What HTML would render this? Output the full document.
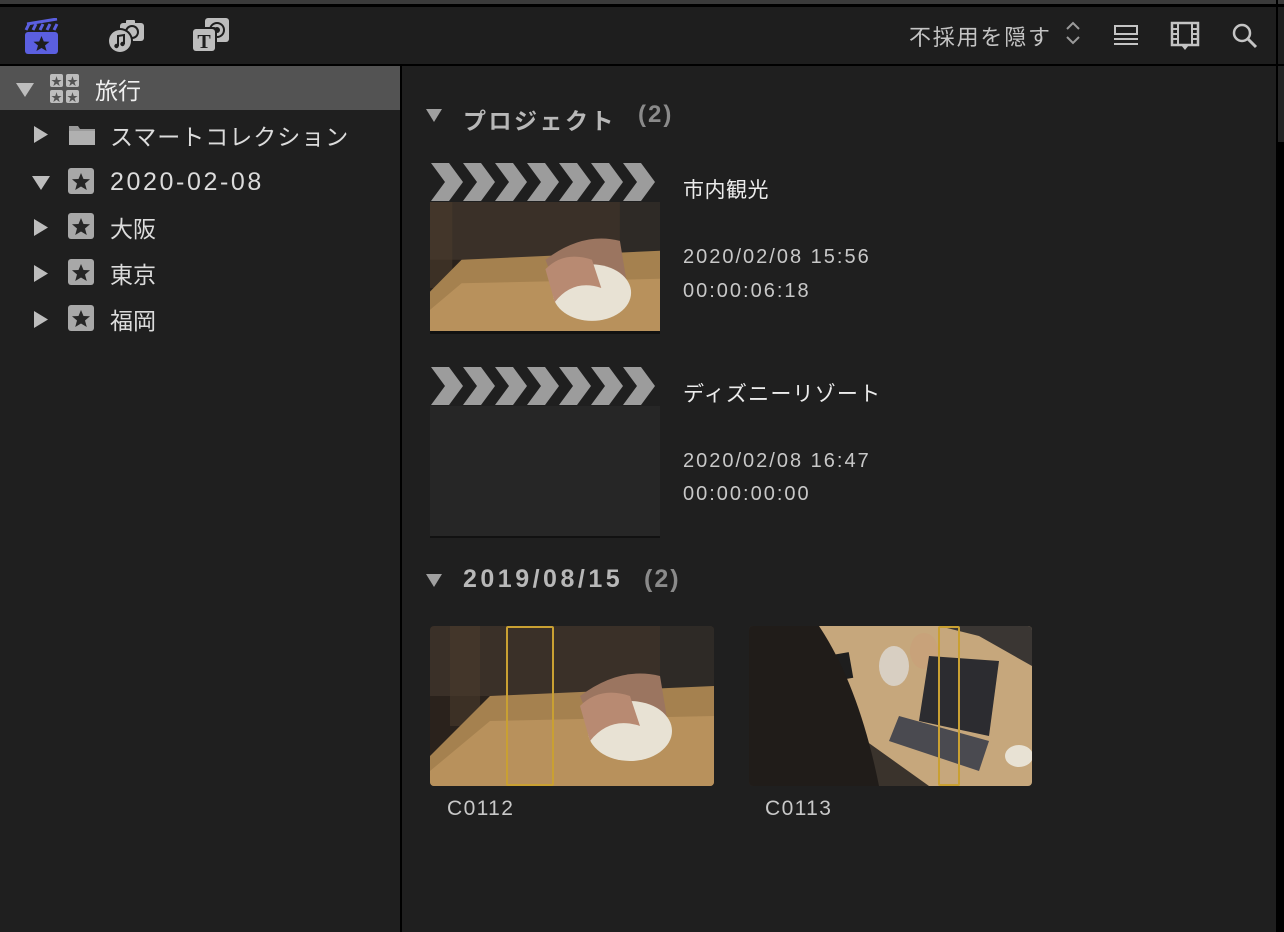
<!DOCTYPE html>
<html><head><meta charset="utf-8"><style>
*{margin:0;padding:0;box-sizing:border-box}
body{width:1284px;height:932px;background:#1f1f1f;position:relative;overflow:hidden;font-family:"Liberation Sans","Noto Sans CJK JP",sans-serif;color:#d8d8d8}
.a{position:absolute}
.t{position:absolute;white-space:nowrap}
</style></head><body>
<div class="a" style="left:0;top:0;width:1284px;height:4px;background:#3a3a3a"></div>
<div class="a" style="left:0;top:4px;width:1284px;height:3px;background:#000"></div>
<div class="a" style="left:0;top:7px;width:1284px;height:57px;background:#1e1e1e"></div>
<div class="a" style="left:0;top:64px;width:1284px;height:2px;background:#000"></div>
<div class="a" style="left:400px;top:66px;width:2px;height:866px;background:#000"></div>
<div class="a" style="left:1276px;top:0;width:2px;height:932px;background:#000"></div>
<div class="a" style="left:1278px;top:66px;width:6px;height:866px;background:#000"></div>
<div class="a" style="left:1278px;top:66px;width:6px;height:76px;background:#232323"></div>

<!-- toolbar icons -->
<svg class="a" style="left:24px;top:18px" width="36" height="38" viewBox="0 0 36 38">
<rect x="1" y="14" width="33" height="22" rx="3" fill="#5b5fe0"/>
<rect x="1" y="6" width="33" height="7" fill="#1e1e1e"/>
<path d="M2 12 L5 6 M9 12 L12 6 M16 12 L19 6 M23 12 L26 6 M30 12 L33 6" stroke="#5b5fe0" stroke-width="3"/>
<path d="M3 6 L33 1" stroke="#5b5fe0" stroke-width="3"/>
<polygon points="17.5,18 19.8,23.5 25.5,23.8 21,27.5 22.6,33 17.5,30 12.4,33 14,27.5 9.5,23.8 15.2,23.5" fill="#1e1e1e"/>
</svg>
<svg class="a" style="left:106px;top:17px" width="40" height="38" viewBox="0 0 40 38">
<rect x="14" y="6" width="24" height="18" rx="3" fill="#bdbdbd"/>
<rect x="20" y="3" width="9" height="5" rx="1" fill="#bdbdbd"/>
<circle cx="26" cy="15" r="7" fill="#1e1e1e"/><circle cx="26" cy="15" r="5" fill="#bdbdbd"/>
<circle cx="14" cy="24" r="13" fill="#1e1e1e"/>
<circle cx="14" cy="24" r="11" fill="#bdbdbd"/>
<path d="M12 29 V19 L18 18 V27" stroke="#1e1e1e" stroke-width="2" fill="none"/>
<circle cx="10.5" cy="29" r="2.2" fill="#1e1e1e"/><circle cx="16.5" cy="27" r="2.2" fill="#1e1e1e"/>
</svg>
<svg class="a" style="left:191px;top:17px" width="40" height="38" viewBox="0 0 40 38">
<rect x="14" y="1" width="24" height="24" rx="3" fill="#bdbdbd"/>
<circle cx="26" cy="13" r="8" fill="#1e1e1e"/><circle cx="26" cy="13" r="6" fill="#bdbdbd"/><circle cx="26" cy="13" r="3" fill="#1e1e1e"/>
<rect x="0" y="10" width="26" height="26" rx="3" fill="#1e1e1e"/>
<rect x="2" y="12" width="22" height="22" rx="3" fill="#bdbdbd"/>
<text x="13" y="31" text-anchor="middle" font-family="Liberation Serif" font-weight="bold" font-size="20" fill="#1e1e1e">T</text>
</svg>

<div class="t" style="left:909px;top:20px;font-size:22px;letter-spacing:1.8px;color:#c4c4c4">不採用を隠す</div>
<svg class="a" style="left:1064px;top:20px" width="18" height="26"><path d="M3 9 L9 3 L15 9 M3 17 L9 23 L15 17" stroke="#9a9a9a" stroke-width="2" fill="none"/></svg>
<svg class="a" style="left:1113px;top:22px" width="28" height="26"><rect x="2" y="4" width="22" height="8" stroke="#c4c4c4" stroke-width="2" fill="none"/><path d="M1 17 H25 M1 22 H25" stroke="#c4c4c4" stroke-width="2"/></svg>
<svg class="a" style="left:1170px;top:20px" width="32" height="32"><rect x="2" y="3" width="26" height="22" stroke="#c4c4c4" stroke-width="2.5" fill="none"/><path d="M8 3 V25 M22 3 V25 M2 9 H8 M2 14 H8 M2 19 H8 M22 9 H28 M22 14 H28 M22 19 H28" stroke="#c4c4c4" stroke-width="2"/><polygon points="11,25 19,25 15,30" fill="#c4c4c4"/></svg>
<svg class="a" style="left:1231px;top:22px" width="30" height="28"><circle cx="11" cy="11" r="8" stroke="#c4c4c4" stroke-width="2.5" fill="none"/><path d="M17 17 L25 25" stroke="#c4c4c4" stroke-width="3"/></svg>

<!-- sidebar -->
<div class="a" style="left:0;top:66px;width:400px;height:44px;background:#535353"></div>
<svg class="a" style="left:15px;top:82px" width="20" height="16"><polygon points="1,1 19,1 10,15" fill="#bdbdbd"/></svg>
<svg class="a" style="left:49px;top:73px" width="32" height="32">
<g fill="#bdbdbd"><rect x="1" y="1" width="13" height="13" rx="2"/><rect x="17" y="1" width="13" height="13" rx="2"/><rect x="1" y="17" width="13" height="13" rx="2"/><rect x="17" y="17" width="13" height="13" rx="2"/></g>
<g fill="#535353" font-size="11" text-anchor="middle"><text x="7.5" y="12">★</text><text x="23.5" y="12">★</text><text x="7.5" y="28">★</text><text x="23.5" y="28">★</text></g></svg>
<div class="t" style="left:95px;top:72px;font-size:23px;color:#f0f0f0">旅行</div>

<svg class="a" style="left:33px;top:125px" width="16" height="20"><polygon points="1,1 15,9.5 1,18" fill="#bdbdbd"/></svg>
<svg class="a" style="left:68px;top:123px" width="28" height="24"><path d="M1 3 H10 L12 6 H27 V22 H1 Z" fill="#9a9a9a"/><rect x="1" y="8" width="26" height="14" fill="#b0b0b0"/></svg>
<div class="t" style="left:110px;top:118px;font-size:23px;letter-spacing:1px;color:#dcdcdc">スマートコレクション</div>

<svg class="a" style="left:31px;top:175px" width="20" height="16"><polygon points="1,1 19,1 10,15" fill="#bdbdbd"/></svg>
<div class="t" style="left:110px;top:168px;font-size:25px;letter-spacing:2.6px;color:#dcdcdc">2020-02-08</div>
<div class="t" style="left:110px;top:210px;font-size:23px;color:#dcdcdc">大阪</div>
<div class="t" style="left:110px;top:256px;font-size:23px;color:#dcdcdc">東京</div>
<div class="t" style="left:110px;top:302px;font-size:23px;color:#dcdcdc">福岡</div>
<svg class="a" style="left:33px;top:218px" width="16" height="20"><polygon points="1,1 15,9.5 1,18" fill="#bdbdbd"/></svg>
<svg class="a" style="left:33px;top:264px" width="16" height="20"><polygon points="1,1 15,9.5 1,18" fill="#bdbdbd"/></svg>
<svg class="a" style="left:33px;top:310px" width="16" height="20"><polygon points="1,1 15,9.5 1,18" fill="#bdbdbd"/></svg>
<svg class="a" style="left:67px;top:168px" width="28" height="250">
<defs><g id="st"><rect x="1" y="0" width="26" height="26" rx="3" fill="#a8a8a8"/><polygon points="14,5 16.5,11 23,11.3 18,15.5 19.8,22 14,18.5 8.2,22 10,15.5 5,11.3 11.5,11" fill="#262626"/></g></defs>
<use href="#st" y="0"/><use href="#st" y="45"/><use href="#st" y="91"/><use href="#st" y="137"/>
</svg>

<!-- projects header -->
<svg class="a" style="left:425px;top:108px" width="18" height="16"><polygon points="1,1 17,1 9,14" fill="#a0a0a0"/></svg>
<div class="t" style="left:463px;top:102px;font-size:23px;font-weight:bold;letter-spacing:2.5px;color:#b8b8b8">プロジェクト</div>
<div class="t" style="left:638px;top:101px;font-size:24px;font-weight:bold;letter-spacing:2px;color:#8a8a8a">(2)</div>

<svg width="0" height="0" style="position:absolute"><defs>
<g id="chev"><polygon points="0,0 18,0 32,19 18,38 0,38 14,19" fill="#9c9c9c"/></g>
<g id="mouse">
<rect width="284" height="160" fill="#2a221c"/>
<rect x="0" y="0" width="284" height="70" fill="#3a3028"/>
<rect x="20" y="0" width="30" height="100" fill="#4a3a2c" opacity=".6"/>
<rect x="230" y="0" width="54" height="160" fill="#2e2a26"/>
<polygon points="0,130 60,70 284,60 284,160 0,160" fill="#a5814f"/>
<polygon points="0,145 60,95 284,90 284,160 0,160" fill="#b8915c"/>
<path d="M150 70 Q190 40 230 50 L240 110 L170 120 Z" fill="#9b7560"/>
<ellipse cx="200" cy="105" rx="42" ry="30" fill="#e8e2d4"/>
<path d="M150 80 Q170 60 200 70 L210 100 Q180 90 160 115 Z" fill="#b88a72"/>
</g>
</defs></svg>

<!-- project 1 -->
<svg class="a" style="left:431px;top:163px" width="228" height="38"><use href="#chev" x="0"/><use href="#chev" x="32"/><use href="#chev" x="64"/><use href="#chev" x="96"/><use href="#chev" x="128"/><use href="#chev" x="160"/><use href="#chev" x="192"/></svg>
<svg class="a" style="left:430px;top:202px" width="230" height="131" viewBox="0 0 284 160" preserveAspectRatio="none"><use href="#mouse" transform="translate(-30,-10) scale(1.15)"/></svg>
<div class="a" style="left:430px;top:331px;width:230px;height:3px;background:#111"></div>
<div class="t" style="left:683px;top:174px;font-size:21px;letter-spacing:0.5px;color:#ececec">市内観光</div>
<div class="t" style="left:683px;top:246px;font-size:20px;letter-spacing:2px;color:#c8c8c8">2020/02/08 15:56</div>
<div class="t" style="left:683px;top:280px;font-size:20px;letter-spacing:2px;color:#c8c8c8">00:00:06:18</div>

<!-- project 2 -->
<svg class="a" style="left:431px;top:367px" width="228" height="38"><use href="#chev" x="0"/><use href="#chev" x="32"/><use href="#chev" x="64"/><use href="#chev" x="96"/><use href="#chev" x="128"/><use href="#chev" x="160"/><use href="#chev" x="192"/></svg>
<div class="a" style="left:430px;top:406px;width:230px;height:130px;background:#262626"></div>
<div class="a" style="left:430px;top:536px;width:230px;height:2px;background:#111"></div>
<div class="t" style="left:683px;top:378px;font-size:21px;letter-spacing:1.2px;color:#ececec">ディズニーリゾート</div>
<div class="t" style="left:683px;top:450px;font-size:20px;letter-spacing:2px;color:#c8c8c8">2020/02/08 16:47</div>
<div class="t" style="left:683px;top:483px;font-size:20px;letter-spacing:2px;color:#c8c8c8">00:00:00:00</div>

<!-- event header -->
<svg class="a" style="left:425px;top:573px" width="18" height="16"><polygon points="1,1 17,1 9,14" fill="#a0a0a0"/></svg>
<div class="t" style="left:463px;top:565px;font-size:25px;font-weight:bold;letter-spacing:3.5px;color:#b8b8b8">2019/08/15</div>
<div class="t" style="left:644px;top:565px;font-size:25px;font-weight:bold;letter-spacing:2px;color:#8a8a8a">(2)</div>

<!-- clip 1 -->
<div class="a" style="left:430px;top:626px;width:284px;height:160px;border-radius:4px;overflow:hidden;background:#2a221c">
<svg width="284" height="160"><use href="#mouse"/></svg></div>
<div class="a" style="left:506px;top:626px;width:48px;height:160px;border:2px solid #c9a032;border-radius:2px"></div>
<div class="t" style="left:447px;top:797px;font-size:21px;letter-spacing:1.4px;color:#c8c8c8">C0112</div>

<!-- clip 2 -->
<div class="a" style="left:749px;top:626px;width:283px;height:160px;border-radius:4px;overflow:hidden;background:#2a2622">
<svg width="283" height="160">
<rect width="283" height="160" fill="#3a332c"/>
<polygon points="60,0 283,0 283,160 180,160 40,60" fill="#c6a77c"/>
<polygon points="190,0 283,0 283,40 230,10" fill="#3a3633"/>
<rect x="80" y="28" width="22" height="26" fill="#1e1e1e" transform="rotate(-10 90 40)"/>
<ellipse cx="145" cy="40" rx="15" ry="20" fill="#d8cfc2"/><ellipse cx="175" cy="25" rx="14" ry="18" fill="#c8a27a"/>
<polygon points="180,30 250,35 240,110 170,95" fill="#2c2c30"/>
<polygon points="150,90 240,115 230,145 140,115" fill="#4a4a50"/>
<ellipse cx="270" cy="130" rx="14" ry="11" fill="#e8e2d4"/>
<path d="M0 0 H70 Q110 60 130 160 H0 Z" fill="#201c19"/>
</svg></div>
<div class="a" style="left:938px;top:626px;width:22px;height:160px;border:2px solid #c9a032;border-radius:2px"></div>
<div class="t" style="left:765px;top:797px;font-size:21px;letter-spacing:1.4px;color:#c8c8c8">C0113</div>
</body></html>
